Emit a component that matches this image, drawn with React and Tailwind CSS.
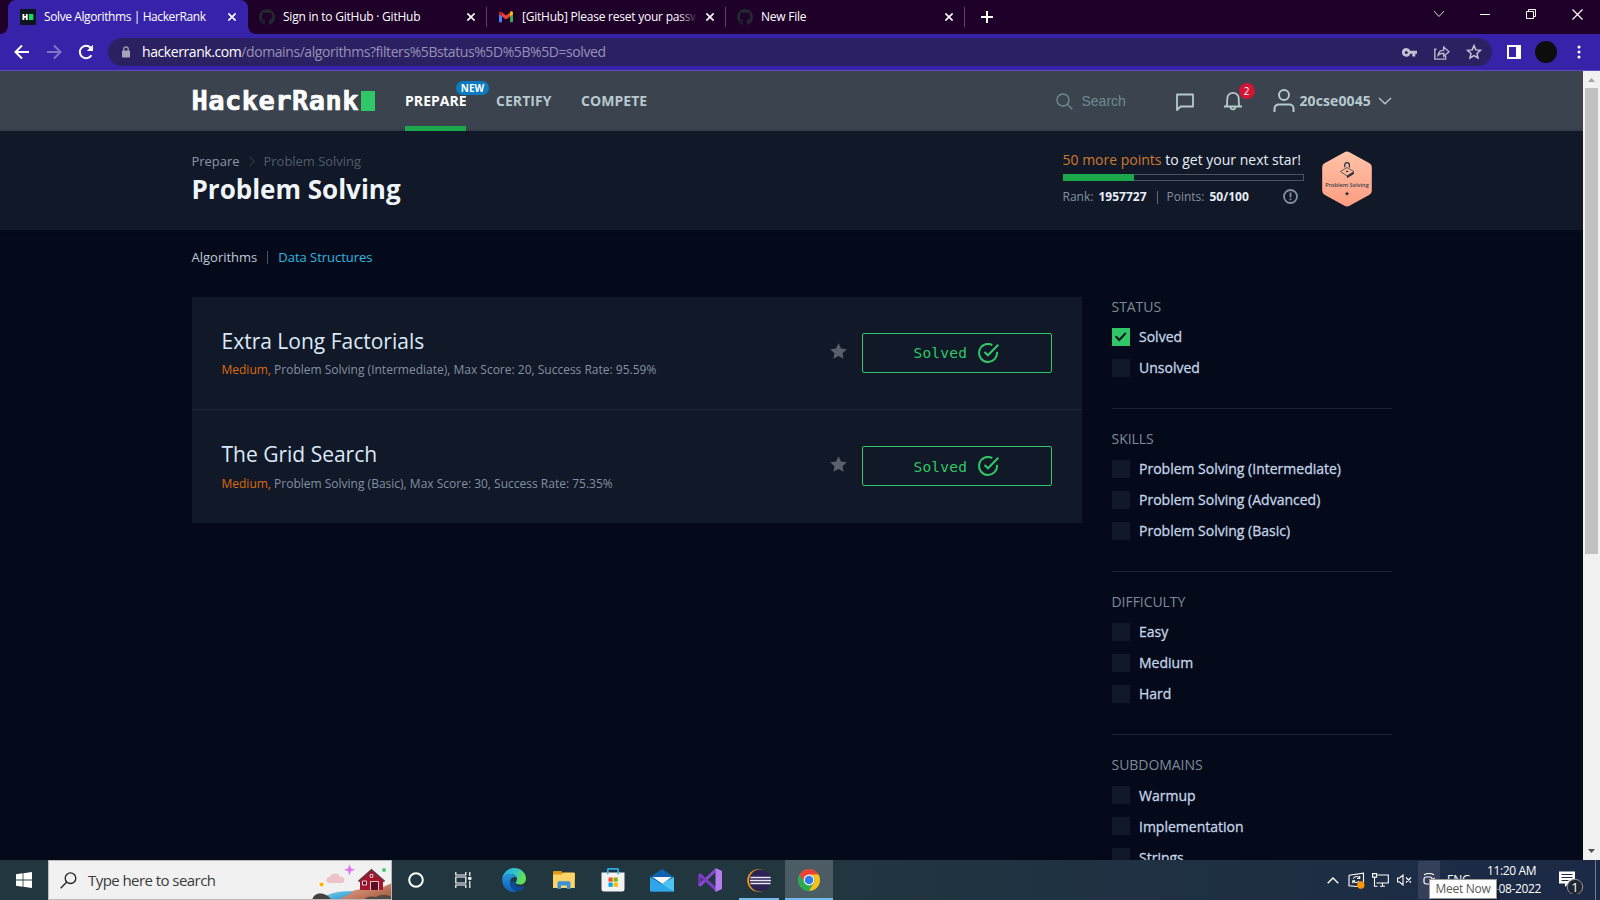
import React from "react";

const UI = "font-['Open_Sans',sans-serif]";

function GitHubMark() {
  return (
    <svg width="16" height="16" viewBox="0 0 16 16" fill="#24292f">
      <path d="M8 0C3.58 0 0 3.58 0 8c0 3.54 2.29 6.53 5.47 7.59.4.07.55-.17.55-.38 0-.19-.01-.82-.01-1.49-2.01.37-2.53-.49-2.69-.94-.09-.23-.48-.94-.82-1.13-.28-.15-.68-.52-.01-.53.63-.01 1.08.58 1.23.82.72 1.21 1.87.87 2.33.66.07-.52.28-.87.51-1.07-1.78-.2-3.64-.89-3.64-3.95 0-.87.31-1.59.82-2.15-.08-.2-.36-1.02.08-2.12 0 0 .67-.21 2.2.82.64-.18 1.32-.27 2-.27s1.36.09 2 .27c1.53-1.04 2.2-.82 2.2-.82.44 1.1.16 1.92.08 2.12.51.56.82 1.27.82 2.15 0 3.07-1.87 3.75-3.65 3.95.29.25.54.73.54 1.48 0 1.07-.01 1.93-.01 2.2 0 .21.15.46.55.38A8.01 8.01 0 0 0 16 8c0-4.42-3.58-8-8-8z" />
    </svg>
  );
}

function GmailMark() {
  return (
    <svg width="16" height="16" viewBox="0 0 16 16">
      <path d="M1 4v8.4c0 .5.4.9.9.9H4V6.500L1 4z" fill="#4285f4" />
      <path d="M12 6.500v6.800h2.100c.5 0 .9-.4.9-.9V4l-3 2.500z" fill="#34a853" />
      <path d="M12 3.600v3.900l3-2.300V4c0-1.500-1.600-2.100-2.700-1.300L12 3.600z" fill="#fbbc04" />
      <path d="M4 7.500V3.400l4 3 4-3v4.100l-4 3-4-3z" fill="#ea4335" />
      <path d="M1 4v1.200l3 2.300V3.400l-.7-.6C2.300 2 1 2.700 1 4z" fill="#c5221f" />
    </svg>
  );
}

function HrMark() {
  return (
    <svg width="16" height="16" viewBox="0 0 16 16">
      <rect width="16" height="16" fill="#0e141e" />
      <path d="M2.500 5h1.800v2h1.600V5h1.800v6H5.900V8.700H4.300V11H2.500z" fill="#fff" />
      <rect x="9" y="5" width="4.300" height="6" fill="#0be063" />
    </svg>
  );
}

function CloseX() {
  return (
    <svg width="8" height="8" viewBox="0 0 8 8" stroke="#fff" strokeWidth="1.600" className="shrink-0">
      <path d="M.4.4l7.200 7.200M7.600.4L.4 7.600" />
    </svg>
  );
}

function Tab({ icon, title, fade }) {
  return (
    <div className="flex h-[34px] w-[239px] shrink-0 items-center pl-[11px]">
      <span className="h-4 w-4 shrink-0">{icon}</span>
      <div className="relative ml-[8px] w-[175px] overflow-hidden whitespace-nowrap text-[12px] leading-[16px] tracking-[-0.23px] text-white">
        {title}
        {fade && <span className="absolute inset-y-0 right-0 w-[18px] bg-gradient-to-r from-transparent to-[#1e0029]" />}
      </div>
      <span className="ml-[9px] flex"><CloseX /></span>
      <span className="ml-[11px] h-[20px] w-px bg-[#5c4566]" />
    </div>
  );
}

function TabStrip() {
  return (
    <div className="relative flex h-[34px] bg-[#1e0029]">
      <div className="relative flex h-[34px] w-[248px] shrink-0 items-center rounded-t-[8px] pl-[20px]">
        <svg className="absolute left-0 top-0" width="257" height="34" viewBox="0 0 257 34">
          <path d="M0 34a8 8 0 0 0 8-8V8a8 8 0 0 1 8-8H240a8 8 0 0 1 8 8v18a8 8 0 0 0 8 8z" fill="#3723a9" />
        </svg>
        <span className="relative h-4 w-4 shrink-0"><HrMark /></span>
        <div className="relative ml-[8px] w-[175px] whitespace-nowrap text-[12px] leading-[16px] tracking-[-0.4px] text-white">
          Solve Algorithms | HackerRank
        </div>
        <span className="relative ml-[9px] flex"><CloseX /></span>
      </div>
      <Tab icon={<GitHubMark />} title="Sign in to GitHub · GitHub" />
      <Tab icon={<GmailMark />} title="[GitHub] Please reset your password" fade />
      <Tab icon={<GitHubMark />} title="New File" />
      <div className="flex w-[43px] items-center justify-center">
        <svg width="12" height="12" viewBox="0 0 12 12" stroke="#fff" strokeWidth="2"><path d="M6 0v12M0 6h12" /></svg>
      </div>
      <div className="ml-auto flex h-[28px] items-center">
        <div className="flex w-[46px] justify-center">
          <svg width="12" height="8" viewBox="0 0 12 8" fill="none" stroke="#d8cfdc" strokeWidth="1"><path d="M1 1l5 5.500L11 1" /></svg>
        </div>
        <div className="flex w-[46px] justify-center"><span className="h-px w-[10px] bg-white" /></div>
        <div className="flex w-[46px] justify-center">
          <svg width="10" height="10" viewBox="0 0 10 10" fill="none" stroke="#fff"><path d="M.5 2.500h7v7h-7zM2.500 2.500v-2h7v7h-2" /></svg>
        </div>
        <div className="flex w-[46px] justify-center">
          <svg width="11" height="11" viewBox="0 0 11 11" stroke="#fff" strokeWidth="1.200"><path d="M.5.500l10 10M10.500.500l-10 10" /></svg>
        </div>
      </div>
    </div>
  );
}

function Toolbar() {
  return (
    <div className="flex h-[37px] items-center border-b border-[#5c4bbd] bg-[#3723a9]">
      <div className="flex w-[108px] items-center pl-[14px]">
        <svg width="16" height="16" viewBox="0 0 16 16" fill="none" stroke="#fff" strokeWidth="2"><path d="M15 8H2M8 1.500L1.500 8 8 14.500" /></svg>
        <svg className="ml-[16px]" width="16" height="16" viewBox="0 0 16 16" fill="none" stroke="#8175cb" strokeWidth="2"><path d="M1 8h13M8 1.500L14.500 8 8 14.500" /></svg>
        <svg className="ml-[16px]" width="16" height="16" viewBox="0 0 16 16" fill="none" stroke="#fff" strokeWidth="2"><path d="M13.400 11.200A6.200 6.200 0 1 1 12.600 3.800L14 5.200" /><path d="M15 .8v6.200H8.800z" fill="#fff" stroke="none" /></svg>
      </div>
      <div className="flex h-[28px] w-[1384px] items-center rounded-full bg-[#2b2162]">
        <svg className="ml-[14px]" width="8" height="12" viewBox="0 0 8 12"><rect x="0" y="4.500" width="8" height="7" rx=".8" fill="#a7a4b7" /><path d="M1.800 5V3a2.200 2.200 0 0 1 4.400 0v2" fill="none" stroke="#a7a4b7" strokeWidth="1.200" /></svg>
        <div className="ml-[12px] whitespace-nowrap text-[14px] leading-[20px] tracking-[-0.42px] text-[#9791b6]">
          <span className="text-white">hackerrank.com</span>/domains/algorithms?filters%5Bstatus%5D%5B%5D=solved
        </div>
        <div className="ml-auto mr-[10px] flex items-center">
          <svg width="15" height="9" viewBox="0 0 15 9" fill="#c2bfd2"><path fillRule="evenodd" d="M4.300 0a4.300 4.300 0 1 0 4 5.700h2v2.800h3V5.700H15V2.800H8.300A4.300 4.300 0 0 0 4.300 0zm0 2.900a1.500 1.500 0 1 1 0 3 1.500 1.500 0 0 1 0-3z" /></svg>
          <svg className="ml-[17px]" width="16" height="15" viewBox="0 0 16 15" fill="none" stroke="#bab6cc" strokeWidth="1.400"><path d="M2.500 4.200H.8v9.900h10.800v-3.300M4 10.300c.5-3.400 2.500-5 5.700-5.200V2L15 6.700l-5.300 4.600V8.200C7.200 8.200 5.400 8.900 4 10.300z" /></svg>
          <svg className="ml-[16px]" width="16" height="16" viewBox="0 0 16 16" fill="none" stroke="#c6c3d5" strokeWidth="1.500"><path d="M8 1.600l1.800 4.300 4.700.4-3.500 3.100 1 4.500L8 11.500l-4 2.400 1-4.500L1.500 6.300l4.700-.4z" /></svg>
        </div>
      </div>
      <svg className="ml-[15px]" width="14" height="14" viewBox="0 0 14 14" fill="#fff"><path fillRule="evenodd" d="M0 0h14v14H0zM2 2v10h7V2z" /></svg>
      <span className="ml-[14px] h-[22px] w-[22px] rounded-full bg-[#0d0d0d]" />
      <svg className="ml-[20px]" width="4" height="14" viewBox="0 0 4 14" fill="#fff"><circle cx="2" cy="2" r="1.500" /><circle cx="2" cy="7" r="1.500" /><circle cx="2" cy="12" r="1.500" /></svg>
    </div>
  );
}

function SiteHeader() {
  return (
    <header className="h-[60px] bg-[#3b434f]">
      <div className="mx-auto flex h-full w-[1200px] items-center">
        <div className="flex items-center">
          <span className="w-[169px] whitespace-nowrap font-['DejaVu_Sans_Mono',monospace] text-[27px] font-bold leading-[30px] tracking-[0.5px] text-white [-webkit-text-stroke:0.7px_white]">HackerRank</span>
          <span className="h-[20px] w-[14px] bg-[#32c766]" />
        </div>
        <nav className="ml-[30.500px] flex h-full gap-[30px] whitespace-nowrap text-[14px] font-bold leading-[59px] tracking-[0.05px] text-[#b7c9cc]">
          <div className="relative h-[60px] w-[61px] border-b-[5px] border-[#1ba94c] text-white">
            PREPARE
            <span className="absolute left-[51px] top-[10px] flex h-[14px] w-[33px] items-center justify-center rounded-full bg-[#0b7cc1] text-[10px] leading-[14px] text-white">NEW</span>
          </div>
          <div className="w-[55px]">CERTIFY</div>
          <div>COMPETE</div>
        </nav>
        <div className="ml-auto flex h-full items-center">
          <svg width="17" height="17" viewBox="0 0 17 17" fill="none" stroke="#6f8b90" strokeWidth="1.400"><circle cx="7" cy="7" r="6" /><path d="M11.300 11.300l5 5" /></svg>
          <span className="ml-[9px] w-[45px] font-['Liberation_Sans',sans-serif] text-[14px] text-[#6f8b90]">Search</span>
          <svg className="ml-[49px] mt-[1px]" width="18" height="18" viewBox="0 0 18 18" fill="none" stroke="#b7c9cc" strokeWidth="1.800" strokeLinejoin="round"><path d="M1 17V1.500h16v12H4.500z" /></svg>
          <div className="relative ml-[29px] h-[20px] w-[20px]">
            <svg width="20" height="20" viewBox="0 0 20 20" fill="none" stroke="#b7c9cc" strokeWidth="1.800" strokeLinejoin="round"><path d="M1 15.500h18M3.500 15.300C4.500 13 4 11 4.300 7.500a5.700 5.700 0 0 1 11.400 0c.3 3.500-.2 5.500.8 7.800M7.500 16.500a2.600 2.600 0 0 0 5 0" /></svg>
            <span className="absolute left-[16px] top-[-8px] flex h-[16px] w-[16px] items-center justify-center rounded-full bg-[#d11534] text-[10px] leading-none text-white">2</span>
          </div>
          <svg className="mb-[1px] ml-[30px]" width="22" height="23" viewBox="0 0 22 23" fill="none" stroke="#b7c9cc" strokeWidth="2"><circle cx="11" cy="6" r="5" /><path d="M1.500 23v-3.500a4 4 0 0 1 4-4h11a4 4 0 0 1 4 4V23" /></svg>
          <span className="mb-[2px] ml-[5px] w-[74px] whitespace-nowrap text-[14px] font-bold tracking-[0.1px] text-[#b7c9cc]">20cse0045</span>
          <svg className="ml-[4px]" width="14" height="8" viewBox="0 0 14 8" fill="none" stroke="#b7c9cc" strokeWidth="1.300"><path d="M1 1l6 5.800L13 1" /></svg>
        </div>
      </div>
    </header>
  );
}

function HexBadge() {
  return (
    <svg width="50" height="56" viewBox="0 0 50 56">
      <defs>
        <linearGradient id="hex" x1="0" y1="0" x2="0" y2="1">
          <stop offset="0" stopColor="#ffc3a8" />
          <stop offset="1" stopColor="#ff9d81" />
        </linearGradient>
      </defs>
      <path d="M22.500 1.200a5 5 0 0 1 5 0L47.500 12.300a4.500 4.500 0 0 1 2.300 4V39.700a4.500 4.500 0 0 1-2.300 4L27.500 54.800a5 5 0 0 1-5 0L2.500 43.700a4.500 4.500 0 0 1-2.300-4V16.300a4.500 4.500 0 0 1 2.300-4z" fill="url(#hex)" />
      <path d="M18.500 20.500l6.500-4 6.800 4-6.800 4.500z" fill="none" stroke="#39424e" strokeWidth=".8" />
      <path d="M25 25l6.800-4.300v2.200L25 27.200z" fill="#273040" />
      <path d="M22.800 16.200v-2.200a2.300 2.300 0 0 1 4.600 0v2.600M24 20.300h2.200" fill="none" stroke="#273040" strokeWidth="1.200" />
      <text x="25" y="36.400" textAnchor="middle" fontFamily="Open Sans, sans-serif" fontSize="5.600" fontWeight="600" fill="#39424e">Problem Solving</text>
      <path d="M25 40.500l.7 1.300 1.400.2-1 1 .2 1.400-1.300-.7-1.300.7.2-1.400-1-1 1.400-.2z" fill="#273040" />
    </svg>
  );
}

function Banner() {
  return (
    <section className="h-[99px] bg-[#111827] shadow-[0_1px_3px_rgba(10,16,30,0.9)]">
      <div className="mx-auto flex w-[1200px] justify-between">
        <div className="pt-[20px]">
          <div className="flex items-center text-[13px] leading-[20px] tracking-[-0.03px] text-[#8b95a5]">
            Prepare
            <svg className="ml-[9px] mr-[9px]" width="6" height="11" viewBox="0 0 6 11" fill="none" stroke="#3b4656"><path d="M.7.700L5.200 5.500.7 10.300" /></svg>
            <span className="text-[#515c6b]">Problem Solving</span>
          </div>
          <h1 className="mt-[2px] text-[26px] font-bold leading-[32px] text-[#f0f5fa]">Problem Solving</h1>
        </div>
        <div className="flex pr-[20px]">
          <div className="mr-[18px] w-[241px] pt-[19px]">
            <div className="whitespace-nowrap text-[14px] leading-[20px] text-[#e7eef8]"><span className="text-[#cf7a30]">50 more points</span> to get your next star!</div>
            <div className="mt-[4px] h-[7px] border border-[#4d535f]"><div className="-ml-px -mt-px h-[7px] w-[71px] bg-[#1ba94c]" /></div>
            <div className="mt-[7px] flex items-center whitespace-nowrap text-[12px] leading-[18px] text-[#8390a3]">
              <span className="w-[36px]">Rank:</span>
              <span className="w-[49px] font-bold text-[#e7eef8]">1957727</span>
              <span className="ml-[9px] h-[13px] w-px bg-[#5f6b7a]" />
              <span className="ml-[9px] w-[43px]">Points:</span>
              <span className="font-bold text-[#e7eef8]">50/100</span>
              <svg className="mb-[2px] ml-auto mr-[6px]" width="15" height="15" viewBox="0 0 15 15" fill="none" stroke="#8390a3" strokeWidth="1.800"><circle cx="7.500" cy="7.500" r="6.500" /><path d="M7.500 3.500v4.800M7.500 9.600v1.700" /></svg>
            </div>
          </div>
          <div className="pt-[20px]"><HexBadge /></div>
        </div>
      </div>
    </section>
  );
}

function Challenge({ title, meta, last }) {
  return (
    <div className={`flex h-[113px] pl-[30px] pr-[30px] ${last ? "" : "border-b border-[#1d2533]"}`}>
      <div className="whitespace-nowrap pt-[30px]">
        <div className="text-[21px] leading-[28px] text-[#dbe9f9]">{title}</div>
        <div className={`text-[12px] leading-[16px] text-[#8390a3] ${last ? "mt-[8px]" : "mt-[7px]"}`}><span className="text-[#dd6a0c]">Medium, </span>{meta}</div>
      </div>
      <svg className="ml-auto mt-[46px]" width="17" height="16" viewBox="0 0 17 16" fill="#595f6b"><path d="M8.500.2l2.500 5.300 5.800.7-4.300 4 1.100 5.600-5.100-2.800-5.100 2.800 1.100-5.600-4.300-4 5.800-.7z" /></svg>
      <div className="ml-[15px] mt-[36px] flex h-[40px] w-[190px] items-center rounded-[2px] border border-[#32c766] pl-[51px]">
        <span className={`w-[54px] whitespace-nowrap font-['DejaVu_Sans_Mono',monospace] text-[14.500px] leading-[20px] tracking-[0.2px] text-[#2ec866] ${last ? "pt-[1px]" : ""}`}>Solved</span>
        <svg className="ml-[10px]" width="21" height="20" viewBox="0 0 21 20" fill="none" stroke="#32c766" strokeWidth="2"><path d="M14.300 2A9 9 0 1 0 19 8.800" /><path d="M6.500 9l3.500 3.300L20.300 1.800" /></svg>
      </div>
    </div>
  );
}

function FilterGroup({ title, items, checked, last }) {
  return (
    <div className={last ? "" : "mb-[20px] border-b border-[#1d2533] pb-[31px]"}>
      <div className="text-[14px] leading-[20px] tracking-[-0.05px] text-[#7f8a99]">{title}</div>
      <div className="mt-[11px] flex flex-col gap-[13px]">
        {items.map((t) => (
          <div key={t} className="flex h-[18px] items-center">
            {t === checked ? (
              <span className="flex h-[18px] w-[18px] items-center justify-center bg-[#32c766]">
                <svg width="12" height="10" viewBox="0 0 12 10" fill="none" stroke="#0b1424" strokeWidth="2" strokeLinecap="round"><path d="M1.200 4.800L4.300 8l6-6.500" /></svg>
              </span>
            ) : (
              <span className="h-[18px] w-[18px] bg-[#111827]" />
            )}
            <span className={`ml-[9.500px] whitespace-nowrap text-[14px] leading-[18px] text-[#c5d4e6] [-webkit-text-stroke:0.3px_#c5d4e6] ${last ? "pt-[2px]" : ""}`}>{t}</span>
          </div>
        ))}
      </div>
    </div>
  );
}

function Page() {
  return (
    <div className="flex h-[789px] overflow-hidden">
      <div className="w-[1583px] bg-[#040a1a]">
        <SiteHeader />
        <Banner />
        <div className="mx-auto w-[1200px]">
          <div className="flex items-center pt-[17px] text-[13px] leading-[20px]">
            <span className="text-[#c0cad6]">Algorithms</span>
            <span className="ml-[10px] mr-[10px] h-[13px] w-px bg-[#4a5361]" />
            <span className="tracking-[-0.03px] text-[#2eb9e0]">Data Structures</span>
          </div>
          <div className="mt-[30px] flex justify-between">
            <div className="h-[226px] w-[890px] bg-[#111827]">
              <Challenge title="Extra Long Factorials" meta="Problem Solving (Intermediate), Max Score: 20, Success Rate: 95.59%" />
              <Challenge title="The Grid Search" meta="Problem Solving (Basic), Max Score: 30, Success Rate: 75.35%" last />
            </div>
            <aside className="w-[280px]">
              <FilterGroup title="STATUS" items={["Solved", "Unsolved"]} checked="Solved" />
              <FilterGroup title="SKILLS" items={["Problem Solving (Intermediate)", "Problem Solving (Advanced)", "Problem Solving (Basic)"]} />
              <FilterGroup title="DIFFICULTY" items={["Easy", "Medium", "Hard"]} />
              <FilterGroup title="SUBDOMAINS" items={["Warmup", "Implementation", "Strings"]} last />
            </aside>
          </div>
        </div>
      </div>
      <div className="flex w-[17px] flex-col items-center bg-[#f1f1f1]">
        <svg className="mt-[7px]" width="7" height="4" viewBox="0 0 7 4" fill="#a3a3a3"><path d="M3.500 0L7 4H0z" /></svg>
        <span className="mt-[6px] h-[466px] w-[13px] bg-[#c1c1c1]" />
        <svg className="mb-[7px] mt-auto" width="7" height="4" viewBox="0 0 7 4" fill="#505050"><path d="M3.500 4L0 0h7z" /></svg>
      </div>
    </div>
  );
}

function SearchArt() {
  return (
    <svg width="80" height="38" viewBox="-1 -1 80 38">
      <defs>
        <linearGradient id="sea" x1="0" y1="0" x2="1" y2="1"><stop offset="0" stopColor="#7fd3ee" /><stop offset="1" stopColor="#1f87c4" /></linearGradient>
        <linearGradient id="land" x1="0" y1="0" x2="1" y2="1"><stop offset="0" stopColor="#f0b09a" /><stop offset="1" stopColor="#9a4f31" /></linearGradient>
      </defs>
      <path d="M10 38c2-5 12-9 32-9l6 9z" fill="url(#sea)" />
      <path d="M27 38c4-4 12-5 14-9 5-3 24-1 30-4l9-4v18z" fill="url(#land)" />
      <path d="M0 38c1-4 4-7 9-6.500 5 .5 9 3.500 10 6.500z" fill="#46413f" />
      <path d="M52 38c3-4 8-4 12-3 5-3 11-2 16 0v3z" fill="#544844" />
      <path d="M18 21c-5 0-5-6 0-6 1-4 9-5 10 0 5-1 6 5 2 6z" fill="#ecc3c6" />
      <path d="M37.500 4l1 2.800 2.800 1-2.800 1-1 2.800-1-2.800-2.800-1 2.800-1z" fill="#df79f2" stroke="#df79f2" strokeWidth="1.200" />
      <circle cx="9.500" cy="22.500" r="2" fill="#ffb300" />
      <circle cx="72" cy="8" r="2" fill="#48d070" />
      <path d="M48 28V18L59.500 8 71 18v10z" fill="#a3152f" />
      <path d="M46.500 19.500L59.500 8l13 11.500" fill="none" stroke="#6e3038" strokeWidth="1.800" />
      <path d="M50.500 19h4v4h-4zM58.200 12.500h2.600v2.800h-2.600z" fill="#5a0e1f" stroke="#fff" strokeWidth=".8" />
      <path d="M58.500 28v-8.500h8V28" fill="#5a0e1f" stroke="#f5dcdc" strokeWidth=".9" />
    </svg>
  );
}

function TaskIcon({ children, wide, bar, active }) {
  return (
    <div className={`flex h-[40px] shrink-0 flex-col items-center justify-between ${wide} ${active ? "bg-[#4b5c64]" : ""}`}>
      <div className="flex h-[40px] items-center">{children}</div>
      {bar && <span className={`-mt-[2px] h-[2px] shrink-0 bg-[#76b9ed] ${active ? "w-full" : "w-[40px]"}`} />}
    </div>
  );
}

function Taskbar() {
  return (
    <div className="relative flex h-[40px] items-center bg-gradient-to-r from-[#22363f] via-[#22363f] to-[#1b2946]">
      <div className="flex w-[48px] justify-center">
        <svg width="16" height="16" viewBox="0 0 16 16" fill="#fff"><path d="M0 2.200l6.600-.9v6.300H0zM7.400 1.200L16 0v7.600H7.400zM0 8.400h6.600v6.300L0 13.800zM7.400 8.400H16V16l-8.600-1.200z" /></svg>
      </div>
      <div className="flex h-[40px] w-[344px] items-center border border-[#b9b9b9] bg-[#f1f1f1] pl-[11px]">
        <svg width="17" height="17" viewBox="0 0 17 17" fill="none" stroke="#222" strokeWidth="1.300"><circle cx="10.500" cy="6.200" r="5.300" /><path d="M6.800 10L.7 16.200" /></svg>
        <span className="ml-[11px] whitespace-nowrap text-[15px] leading-[20px] tracking-[-0.56px] text-[#3a3a3a]">Type here to search</span>
        <span className="ml-auto h-[38px]"><SearchArt /></span>
      </div>
      <TaskIcon wide="w-[48px]"><svg width="16" height="16" viewBox="0 0 16 16" fill="none" stroke="#fff" strokeWidth="2"><circle cx="8" cy="8" r="6.800" /></svg></TaskIcon>
      <TaskIcon wide="w-[47px]">
        <svg width="17" height="16" viewBox="0 0 17 16" fill="none" stroke="#fff" strokeWidth="1.200"><path d="M.8 0v3h10V0M.8 16v-3h10v3M.8 5h10v6H.8zM14.800 0v4M14.800 9v7" /><path d="M13.200 5h3.200v2.800h-3.200z" fill="#fff" stroke="none" /></svg>
      </TaskIcon>
      <TaskIcon wide="w-[54px]">
        <svg width="24" height="24" viewBox="0 0 24 24">
          <defs>
            <linearGradient id="e1" x1="0" y1="0" x2="1" y2=".3"><stop offset="0" stopColor="#1fa2e4" /><stop offset=".6" stopColor="#36c6c5" /><stop offset="1" stopColor="#63e052" /></linearGradient>
            <linearGradient id="e2" x1="0" y1="0" x2="0" y2="1"><stop offset="0" stopColor="#2596dc" /><stop offset="1" stopColor="#0f5fb8" /></linearGradient>
          </defs>
          <path d="M.2 11.500C.8 4.500 6 0 12 0c7 0 12 5 12 10.500 0 4-3 6-6 6-3 0-4.500-1-4.500-1.900 0-.8 1.500-1.200 1.500-3.600C15 8 12 6 8.500 6 4.500 6 1.500 8.500.2 11.500z" fill="url(#e1)" />
          <path d="M.2 11.500C1.500 8 4.800 6 8.500 6c3 0 5.500 1.500 6.300 3.500C10 7.500 7.500 12 8 15.500c.5 4.500 5 7.500 8 8C8 26 0 20.500.2 11.500z" fill="url(#e2)" />
          <path d="M8.300 14c-.8 5.500 5 10 10 8.500 1.800-.8 3.500-2.500 4.300-4 .3-.6-.3-.8-.8-.5-4 2.200-9 .6-9-3.500-1.500-1.500-4-3-4.500-.5z" fill="#0b4b9c" />
        </svg>
      </TaskIcon>
      <TaskIcon wide="w-[46px]">
        <svg width="22" height="18" viewBox="0 0 22 18"><path d="M0 1.200C0 .5.500 0 1.200 0h7l2 2H22v7H0z" fill="#dd9b13" /><path d="M0 3.500h8.500l2-2h10c.8 0 1.300.5 1.300 1.200V17H0z" fill="#fcd468" /><path d="M4.500 18v-6c0-1 .7-1.800 1.800-1.800h9.500c1 0 1.700.8 1.700 1.800v6h-3.600v-3.500H8V18z" fill="#3b91d6" /></svg>
      </TaskIcon>
      <TaskIcon wide="w-[51px]">
        <svg width="24" height="24" viewBox="0 0 24 24"><path d="M6.800 6V1.800c0-.6.400-1 1-1h8.400c.6 0 1 .4 1 1V6" fill="none" stroke="#29aae8" strokeWidth="1.800" /><path d="M.5 4.500h23V21a2.500 2.500 0 0 1-2.500 2.500H3A2.500 2.500 0 0 1 .5 21z" fill="#f2f2f2" /><path d="M6.800 4.500v1.700M17.200 4.500v1.700" stroke="#29aae8" strokeWidth="1.600" /><path d="M7.500 9.500h4.200v4.200H7.500z" fill="#f25022" /><path d="M12.600 9.500h4.200v4.200h-4.200z" fill="#7fba00" /><path d="M7.500 14.600h4.200v4.200H7.500z" fill="#00a4ef" /><path d="M12.600 14.600h4.200v4.200h-4.200z" fill="#ffb900" /></svg>
      </TaskIcon>
      <TaskIcon wide="w-[48px]">
        <svg width="24" height="23" viewBox="0 0 24 23"><path d="M0 8L12 0l12 8v5H0z" fill="#0f62b0" /><path d="M2.500 8h19l-9 7z" fill="#f4f6f8" /><path d="M0 8l24 14.500H1c-.6 0-1-.4-1-1z" fill="#2fa6ea" /><path d="M24 8v13.500c0 .6-.4 1-1 1L11.500 15z" fill="#4cc4f0" /><path d="M11.500 15L24 22.500H1z" fill="#2fa6ea" opacity=".75" /></svg>
      </TaskIcon>
      <TaskIcon wide="w-[48px]">
        <svg width="24" height="24" viewBox="0 0 24 24"><path d="M0 6.500l2.500-1.300 1 1v11.600l-1 1L0 17.500z" fill="#6b33a8" /><path d="M2.500 18.800L17.500 4.200V.2L.5 16.500z" fill="#8a4ad0" /><path d="M2.500 5.200L18 19v4.800L.3 7z" fill="#7a3dbd" /><path d="M17.500 0L24 3v18l-6.500 3z" fill="#b57cf0" /></svg>
      </TaskIcon>
      <TaskIcon wide="w-[49px]" bar>
        <svg width="24" height="23" viewBox="0 0 24 23"><circle cx="11.500" cy="11.500" r="11.300" fill="#f7941e" /><circle cx="13" cy="11.500" r="11" fill="#22363f" /><circle cx="13.500" cy="11.500" r="10.500" fill="#2c2255" /><path d="M3.400 8.500h20.200M3 11.500h21M3.400 14.500h20.200" stroke="#e8e4f2" strokeWidth="1.500" /></svg>
      </TaskIcon>
      <span className="w-[2px]" />
      <TaskIcon wide="w-[48px]" bar active>
        <svg width="22" height="22" viewBox="0 0 22 22"><circle cx="11" cy="11" r="11" fill="#34a853" /><path d="M1.500 5.500A11 11 0 0 1 20.500 5.500L11 6.500l-4.500 7z" fill="#ea4335" /><path d="M20.500 5.500A11 11 0 0 1 11 22l5-8.500a5.500 5.500 0 0 0-5-8z" fill="#fbc116" /><path d="M1.500 5.500L6.300 13.500 11 16.200l1.500-.1L11 22A11 11 0 0 1 1.500 5.500z" fill="#2da94f" /><circle cx="11" cy="11" r="5.400" fill="#fff" /><circle cx="11" cy="11" r="4.300" fill="#2f7bea" /></svg>
      </TaskIcon>
      <div className="ml-auto flex h-full items-center text-white">
        <svg width="12" height="7" viewBox="0 0 12 7" fill="none" stroke="#fff" strokeWidth="1.300"><path d="M.7 6.300L6 1l5.300 5.300" /></svg>
        <svg className="ml-[9px]" width="17" height="17" viewBox="0 0 17 17" fill="none" stroke="#fff" strokeWidth="1.100"><path d="M1 3.200l14.500-2v9M9.500 14.500L1 13.800V3.200" /><path d="M5.300 6.500A3.600 3.600 0 0 1 11.500 6M11.700 4v2.500H9M11 9a3.600 3.600 0 0 1-6-.2M4.800 11.200V8.700h2.500" /><circle cx="12.800" cy="13" r="3.700" fill="#ff9500" stroke="none" /></svg>
        <svg className="ml-[7px]" width="17" height="14" viewBox="0 0 17 14" fill="none" stroke="#fff" strokeWidth="1.100"><path d="M5.500 2h10.800v8H4.500M8 13.300h5M10.500 10v3.300M.6.600h4v3.500h-4zM2.500 4v9.300h3" /></svg>
        <svg className="ml-[8px]" width="15" height="12" viewBox="0 0 15 12" fill="none" stroke="#fff" strokeWidth="1.100"><path d="M.6 4v4h2L6 11V1L2.600 4zM9 3.500l5 5M14 3.500l-5 5" /></svg>
        <div className="ml-[6px] flex h-[38px] w-[22px] justify-center bg-[#343f59] pt-[12px]">
          <svg width="12" height="14" viewBox="0 0 12 14" fill="none" stroke="#fff" strokeWidth="1.200"><path d="M1 1.800Q6-.8 11 1.800M3 4h4a2 2 0 0 1 2 2v3a2 2 0 0 1-2 2H3a2 2 0 0 1-2-2V6a2 2 0 0 1 2-2zM9 7l2-1.500v4L9 8.500" /></svg>
        </div>
        <span className="ml-[7px] w-[24px] text-[12px] leading-[16px] tracking-[-0.4px]">ENG</span>
        <div className="ml-[13px] flex h-full w-[57px] flex-col pt-[2px] text-[12px] leading-[18px] tracking-[-0.35px]">
          <span className="whitespace-nowrap pl-[3px]">11:20 AM</span>
          <span className="self-end whitespace-nowrap">-08-2022</span>
        </div>
        <div className="relative ml-[18px] h-[28px] w-[26px]">
          <svg width="26" height="28" viewBox="0 0 26 28"><path d="M0 5.500h16v12H9.500L6 21v-3.500H0z" fill="#fff" /><path d="M2.500 8.500h11M2.500 11.500h11M2.500 14.500h7" stroke="#1b2946" strokeWidth="1.100" /><circle cx="16" cy="21" r="7.700" fill="#22262e" stroke="#8b919c" strokeWidth="1" /></svg>
          <span className="absolute left-[8px] top-[13px] w-[16px] text-center text-[13px] leading-[16px]">1</span>
        </div>
        <span className="ml-[10px] mr-[4px] h-full w-px bg-[#707b8d]" />
      </div>
      <div className="absolute left-[1429px] top-[19px] flex h-[20px] w-[68px] items-center justify-center whitespace-nowrap border border-[#999] bg-white text-[12px] leading-[16px] tracking-[-0.25px] text-[#575757] shadow-[2px_2px_2px_rgba(0,0,0,0.4)]">Meet Now</div>
    </div>
  );
}

export default function App() {
  return (
    <div className={`h-[900px] w-[1600px] overflow-hidden bg-[#040a1a] ${UI}`}>
      <TabStrip />
      <Toolbar />
      <Page />
      <Taskbar />
    </div>
  );
}
